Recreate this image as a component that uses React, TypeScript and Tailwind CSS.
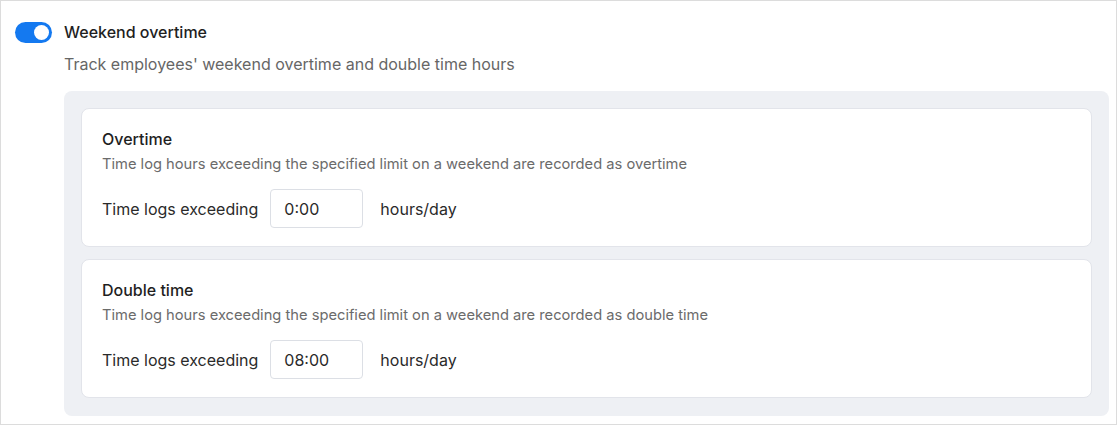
import React, { useState } from "react";

const RuleCard = ({
  title,
  description,
  value,
}: {
  title: string;
  description: string;
  value: string;
}) => {
  const [hours, setHours] = useState(value);

  return (
    <div className="bg-white border border-[#e2e4ea] rounded-lg px-5 pt-[18px] pb-[18px]">
      <h3 className="text-[16px] leading-[24px] font-medium text-[#1f1f1f]">{title}</h3>
      <p className="text-[14.7px] leading-[22px] text-[#6b6b6b] mt-[2px]">{description}</p>
      <div className="flex items-center mt-[14px]">
        <span className="text-[16px] text-[#2a2a2a]">Time logs exceeding</span>
        <input
          type="text"
          value={hours}
          onChange={(e) => setHours(e.target.value)}
          className="ml-3 w-[93px] h-[39px] border border-[#dcdfe5] rounded px-[13px] text-[16px] text-[#2a2a2a] outline-none"
        />
        <span className="ml-[17px] text-[16px] text-[#2a2a2a]">hours/day</span>
      </div>
    </div>
  );
};

export default function App() {
  const [enabled, setEnabled] = useState(true);

  return (
    <div
      className="w-[1117px] h-[425px] bg-white border border-[#dcdcdc] overflow-hidden"
      style={{ fontFamily: "Inter, 'Noto Sans', sans-serif" }}
    >
      <div className="flex items-center gap-3 pl-[14px] pt-[19px]">
        {/* toggle */}
        <button
          onClick={() => setEnabled(!enabled)}
          className={`relative w-[37px] h-[21px] rounded-full ${enabled ? "bg-[#1479f0]" : "bg-[#c5c9d1]"}`}
        >
          <span
            className={`absolute top-[3px] w-[15px] h-[15px] rounded-full bg-white ${enabled ? "right-[3px]" : "left-[3px]"}`}
          ></span>
        </button>
        <span className="text-[16px] leading-[24px] font-medium text-[#1f1f1f]">Weekend overtime</span>
      </div>

      <div className="pl-[63px] pr-[7px]">
        <p className="text-[16px] leading-[24px] text-[#666] mt-[8px]">
          Track employees' weekend overtime and double time hours
        </p>

        <div className="mt-[15px] bg-[#eef0f4] rounded-lg px-[17px] pt-[17px] pb-[18px] flex flex-col gap-3">
          <RuleCard
            title="Overtime"
            description="Time log hours exceeding the specified limit on a weekend are recorded as overtime"
            value="0:00"
          />
          <RuleCard
            title="Double time"
            description="Time log hours exceeding the specified limit on a weekend are recorded as double time"
            value="08:00"
          />
        </div>
      </div>
    </div>
  );
}
